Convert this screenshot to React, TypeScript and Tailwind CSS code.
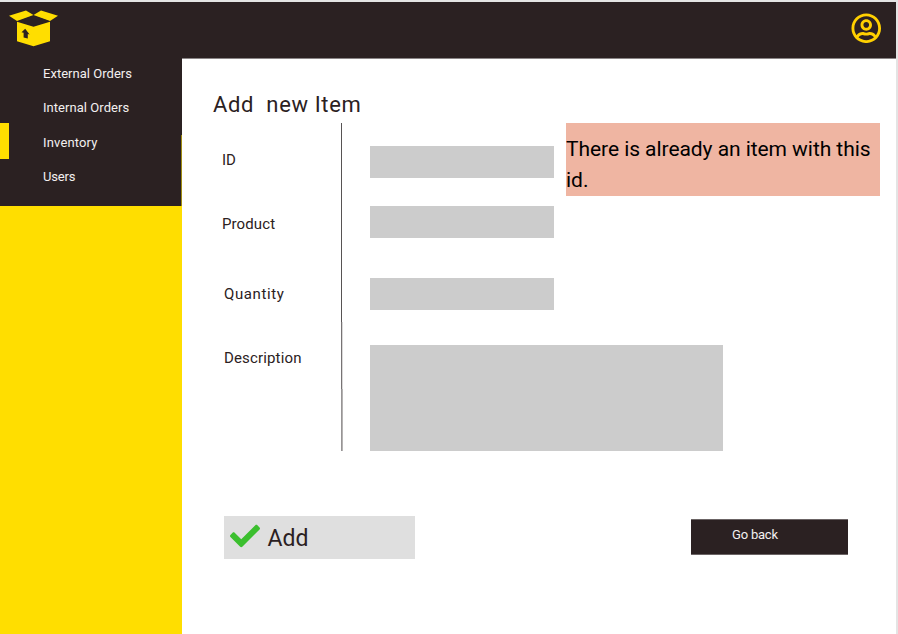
import React from "react";
import { FaCheck, FaRegUserCircle } from "react-icons/fa";

function BoxLogo() {
  return (
    <svg className="ml-2 mt-1.5 h-10 w-[52px]" viewBox="8 8 52 40">
      <g fill="#ffde00">
        <path d="M9 15.8 26 10.6 33.5 15 17 20.9Z" />
        <path d="M33.5 15 41 10.6 58 15.8 50 20.9Z" />
        <path d="M17 21.7 33.5 26.8 50 21.7V41.2L33.5 46.2 17 41.2Z" />
      </g>
      <path d="M18.5 21 33.5 15.8 49 21 33.5 26.1Z" fill="#2b2122" />
      <path d="M25.2 28.8 29.6 34.5 27.8 34V38.6L23.6 37.4V32.8L21.5 32.2Z" fill="#2b2122" />
    </svg>
  );
}

function NavItem({ label, className }: { label: string; className: string }) {
  return (
    <a className={`block h-5 whitespace-nowrap text-[13px] leading-5 text-[#f3f0f0] ${className}`}>{label}</a>
  );
}

function Label({ text, className }: { text: string; className: string }) {
  return <label className={`block h-6 whitespace-nowrap text-[15px] leading-6 ${className}`}>{text}</label>;
}

export default function App() {
  return (
    <div className="flex h-[634px] w-[898px] flex-col overflow-hidden bg-[#e4e4e4] pr-[2px] pt-[2px] font-['Roboto','Noto_Sans',sans-serif] text-[#2b2122]">
      <header className="flex h-14 shrink-0 justify-between bg-[#2b2122]">
        <BoxLogo />
        <FaRegUserCircle className="mr-[14.5px] mt-[10.5px] size-[30.5px] text-[#ffd000]" />
      </header>
      <div className="flex min-h-0 flex-1">
        <aside className="w-[182px] shrink-0 bg-[#ffde00]">
          <nav className="flex h-[148px] bg-[#2b2122]">
            <div className="mt-[65px] h-9 w-[9px] bg-[#ffde00]" />
            <div className="flex-1 pl-[34px] pt-1.5">
              <NavItem label="External Orders" className="tracking-[0.03px]" />
              <NavItem label="Internal Orders" className="mt-3.5 tracking-[0.05px]" />
              <NavItem label="Inventory" className="mt-[15px] tracking-[0.15px]" />
              <NavItem label="Users" className="mt-3.5 tracking-[-0.15px]" />
            </div>
            <div className="mt-[77px] w-px bg-[#a08c12]" />
          </nav>
        </aside>
        <main className="flex-1 border-t border-[#8a8586] bg-white">
          <h1 className="ml-[31px] mt-[31px] h-[30px] whitespace-pre text-[22px] leading-[30px] tracking-[0.65px]">Add  new Item</h1>
          <div className="mt-[3px] flex h-[328px]">
            <div className="w-[159px] pl-10 pt-[25px]">
              <Label text="ID" className="" />
              <Label text="Product" className="mt-10 tracking-[0.1px]" />
              <Label text="Quantity" className="ml-0.5 mt-[46px] tracking-[0.6px]" />
              <Label text="Description" className="ml-0.5 mt-10 tracking-[0.15px]" />
            </div>
            <div className="w-[2px]">
              <div className="h-[199px] w-px bg-[#575354]" />
              <div className="h-[67px] border-r border-[#dad9d9] bg-[#777374]" />
              <div className="h-[62px] border-r border-[#b5b3b3] bg-[#979495]" />
            </div>
            <div className="w-[354px] pl-[27px] pt-[23px]">
              <div className="h-8 w-[184px] bg-[#cccccc]" />
              <div className="mt-7 h-8 w-[184px] bg-[#cccccc]" />
              <div className="mt-10 h-8 w-[184px] bg-[#cccccc]" />
              <div className="mt-[35px] h-[106px] w-[353px] bg-[#cccccc]" />
            </div>
            <p className="-ml-[131px] h-[73px] w-[314px] whitespace-nowrap bg-[#efb5a2] pt-[11px] text-[21px] leading-[31px] text-black">
              <span className="tracking-[-0.06px]">There is already an item with this</span>
              <br />
              id.
            </p>
          </div>
          <div className="mt-[65px] flex pl-[42px]">
            <button className="flex h-[43px] w-[191px] items-center bg-[#dfdfdf] pl-[5.5px]">
              <FaCheck className="-mt-[3px] size-[30px] text-[#3bbf2e]" />
              <span className="ml-2 mt-0.5 text-[23px] leading-[30px]">Add</span>
            </button>
            <button className="ml-[276px] mt-[3px] flex h-9 w-[157px] border-y border-[#6b6465] bg-[#2b2122] pl-[41px] pt-[5px] text-[13px] leading-5 tracking-[-0.2px] text-[#f3f0f0]">
              Go back
            </button>
          </div>
        </main>
      </div>
    </div>
  );
}
